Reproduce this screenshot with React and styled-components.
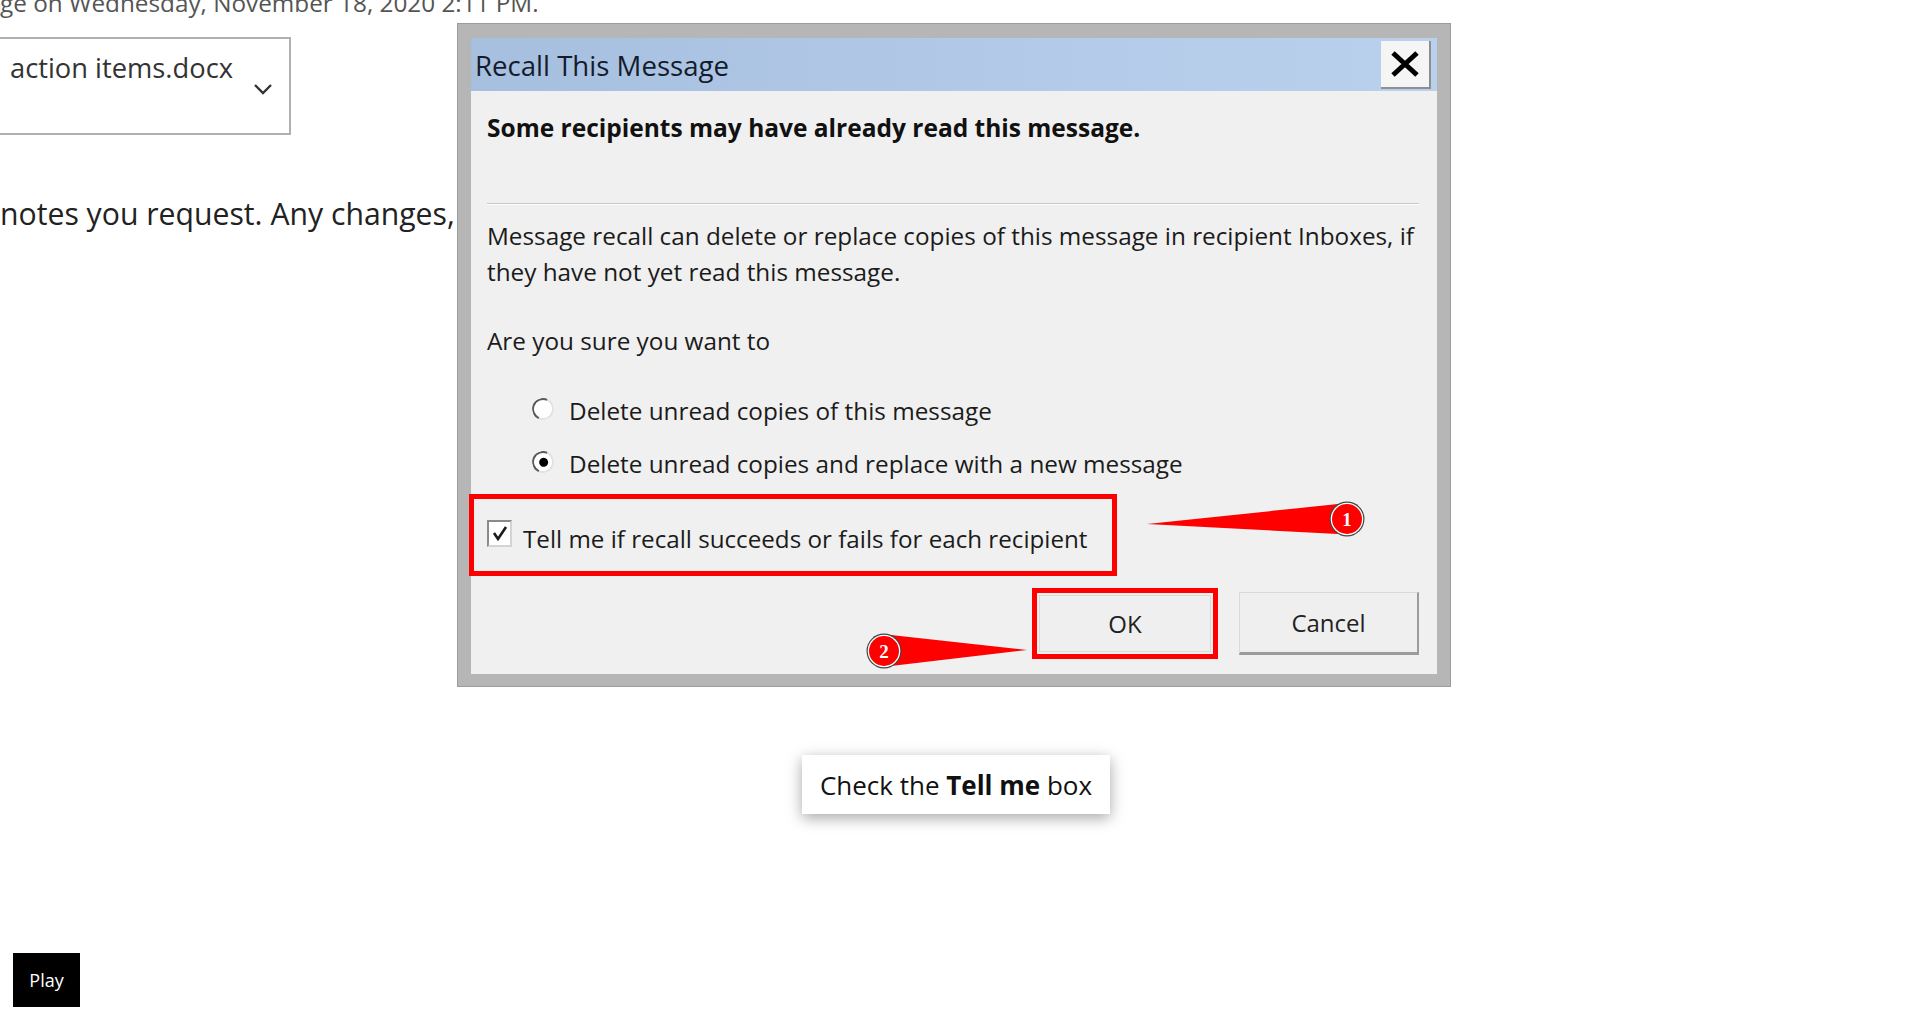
import React from "react";
import styled, { createGlobalStyle } from "styled-components";

const GlobalStyle = createGlobalStyle`
  html, body {
    margin: 0;
    padding: 0;
    background: #fff;
  }
  body {
    font-family: "Open Sans", "Noto Sans", sans-serif;
    color: #1b1b1b;
  }
`;

const SPage = styled.div`
  position: relative;
  width: 1918px;
  height: 1014px;
  overflow: hidden;
  background: #fff;
`;

const SMail = styled.div`
  display: flex;
  flex-direction: column;
  align-items: flex-start;
`;

const SHeaderLine = styled.div`
  margin-top: -12px;
  font-size: 24.3px;
  line-height: 30px;
  color: #555;
  white-space: nowrap;
`;

const SAttachment = styled.div`
  margin-top: 19px;
  margin-left: -20px;
  width: 311px;
  height: 98px;
  border: 2px solid #b0b0b0;
  background: #fff;
  display: flex;
  align-items: flex-start;
  justify-content: space-between;
  padding: 10px 16px 0 28px;
  box-sizing: border-box;
  font-size: 27.3px;
  color: #333;
  white-space: nowrap;
`;

const SChevron = styled.svg`
  margin-top: 34px;
`;

const SBodyLine = styled.div`
  margin-top: 61px;
  font-size: 30.2px;
  line-height: 36px;
  color: #222;
  white-space: nowrap;
`;

const SDialog = styled.div`
  position: absolute;
  left: 457px;
  top: 23px;
  width: 994px;
  height: 664px;
  box-sizing: border-box;
  padding: 14px 13px 12px 13px;
  background: #b6b6b6;
  border: 1px solid #9c9c9c;
  display: flex;
`;

const SWindow = styled.div`
  flex: 1;
  background: #f0f0f0;
  display: flex;
  flex-direction: column;
  position: relative;
`;

const STitleBar = styled.div`
  height: 53px;
  display: flex;
  align-items: center;
  justify-content: space-between;
  padding: 0 6px 0 4px;
  background: linear-gradient(90deg, #a7bfdf 0%, #b3cae8 60%, #bad1ee 100%);
`;

const STitle = styled.div`
  font-size: 27.6px;
  color: #141c2c;
`;

const SClose = styled.button`
  width: 50px;
  height: 48px;
  padding: 0;
  display: flex;
  align-items: center;
  justify-content: center;
  background: #f5f5f5;
  border: 0;
  border-right: 2px solid #8e8e8e;
  border-bottom: 2px solid #8e8e8e;
`;

const SContent = styled.div`
  display: flex;
  flex-direction: column;
  align-items: flex-start;
  padding: 0 18px 0 16px;
`;

const SLead = styled.div`
  margin-top: 22px;
  font-size: 24.5px;
  line-height: 30px;
  font-weight: 700;
  color: #111;
`;

const SRule = styled.div`
  align-self: stretch;
  margin-top: 60px;
  height: 1px;
  background: #c6c6c6;
  border-bottom: 1px solid #fff;
`;

const SText = styled.div`
  margin-top: ${(p) => p.$top}px;
  font-size: 24.3px;
  line-height: 35.5px;
  color: #1b1b1b;
  white-space: nowrap;
`;

const SOptions = styled.div`
  margin-top: 34px;
  padding-left: 45px;
  display: flex;
  flex-direction: column;
  gap: 17px;
`;

const SOption = styled.div`
  display: flex;
  align-items: center;
  gap: 15px;
  height: 36px;
  font-size: 24.3px;
  color: #1b1b1b;
`;

const SRadio = styled.span`
  width: 18px;
  height: 18px;
  margin-top: -4px;
  border-radius: 50%;
  border: 2px solid;
  border-color: #5a5a5a #e2e2e2 #e2e2e2 #5a5a5a;
  transform: rotate(-20deg);
  background: #fff;
  display: flex;
  align-items: center;
  justify-content: center;
  &::after {
    content: "";
    display: ${(p) => (p.$checked ? "block" : "none")};
    width: 9px;
    height: 9px;
    border-radius: 50%;
    background: #000;
  }
`;

const SHighlight = styled.div`
  margin-top: 12px;
  margin-left: -18px;
  width: 648px;
  height: 82px;
  box-sizing: border-box;
  border: 5px solid #ff0000;
  display: flex;
  align-items: center;
  padding: 7px 0 0 13px;
  gap: 11px;
  font-size: 24.2px;
  color: #1b1b1b;
  white-space: nowrap;
`;

const SCheckbox = styled.span`
  width: 25px;
  height: 27px;
  box-sizing: border-box;
  border: 2px solid #8a8a8a;
  border-right-color: #d4d4d4;
  border-bottom-color: #d4d4d4;
  background: #fff;
  display: flex;
  align-items: center;
  justify-content: center;
  margin-top: -9px;
`;

const SButtons = styled.div`
  align-self: stretch;
  margin-top: 12px;
  display: flex;
  justify-content: flex-end;
  align-items: center;
  gap: 21px;
`;

const SOkFrame = styled.div`
  border: 5px solid #ff0000;
  padding: 2px;
  display: flex;
`;

const SButton = styled.button`
  width: ${(p) => p.$w}px;
  height: ${(p) => p.$h}px;
  font-family: "Open Sans", "Noto Sans", sans-serif;
  font-size: 24px;
  color: #222;
  background: #efefef;
  border: 1px solid #dadada;
  border-right: ${(p) => (p.$raised ? "2px solid #9b9b9b" : "1px solid #dadada")};
  border-bottom: ${(p) => (p.$raised ? "3px solid #9b9b9b" : "1px solid #dadada")};
  padding: 0;
`;

const SPointer = styled.svg`
  position: absolute;
  left: ${(p) => p.$x}px;
  top: ${(p) => p.$y}px;
  overflow: visible;
`;

const SCaption = styled.div`
  position: absolute;
  left: 802px;
  top: 755px;
  width: 308px;
  height: 59px;
  background: #fff;
  box-shadow: 0 4px 14px rgba(0, 0, 0, 0.35);
  display: flex;
  align-items: center;
  justify-content: center;
  font-size: 26px;
  color: #111;
  white-space: pre;
  b {
    font-weight: 700;
  }
`;

const SPlay = styled.button`
  position: absolute;
  left: 13px;
  top: 953px;
  width: 67px;
  height: 54px;
  background: #000;
  color: #fff;
  border: 0;
  font-family: "Open Sans", "Noto Sans", sans-serif;
  font-size: 18px;
  padding: 0;
`;

const Badge = ({ cx, cy, label }) => (
  <g>
    <circle cx={cx} cy={cy} r="17.5" fill="#444" />
    <circle cx={cx} cy={cy} r="16.3" fill="#fff" />
    <circle cx={cx} cy={cy} r="15" fill="#ff0000" />
    <text
      x={cx}
      y={cy + 6.5}
      textAnchor="middle"
      fill="#fff"
      fontFamily="Liberation Serif, serif"
      fontWeight="700"
      fontSize="19"
    >
      {label}
    </text>
  </g>
);

const Radio = ({ checked, children }) => (
  <SOption>
    <SRadio $checked={checked} />
    <span>{children}</span>
  </SOption>
);

export default function App() {
  return (
    <SPage>
      <GlobalStyle />
      <SMail>
        <SHeaderLine>ge on Wednesday, November 18, 2020 2:11 PM.</SHeaderLine>
        <SAttachment>
          <span>action items.docx</span>
          <SChevron width="20" height="12" viewBox="0 0 20 12">
            <path d="M2 2 L10 10 L18 2" fill="none" stroke="#333" strokeWidth="2.4" />
          </SChevron>
        </SAttachment>
        <SBodyLine>notes you request. Any changes,</SBodyLine>
      </SMail>

      <SDialog>
        <SWindow>
          <STitleBar>
            <STitle>Recall This Message</STitle>
            <SClose aria-label="Close">
              <svg width="32" height="26" viewBox="0 0 32 26">
                <path d="M4 2 L28 24 M28 2 L4 24" stroke="#000" strokeWidth="5" strokeLinecap="butt" />
              </svg>
            </SClose>
          </STitleBar>
          <SContent>
            <SLead>Some recipients may have already read this message.</SLead>
            <SRule />
            <SText $top={13}>
              Message recall can delete or replace copies of this message in recipient Inboxes, if
              <br />
              they have not yet read this message.
            </SText>
            <SText $top={34}>Are you sure you want to</SText>
            <SOptions>
              <Radio>Delete unread copies of this message</Radio>
              <Radio checked>Delete unread copies and replace with a new message</Radio>
            </SOptions>
            <SHighlight>
              <SCheckbox>
                <svg width="16" height="17" viewBox="0 0 16 17">
                  <path d="M2 8 L6 14 L14 2" fill="none" stroke="#1a1a1a" strokeWidth="2.6" />
                </svg>
              </SCheckbox>
              <span>Tell me if recall succeeds or fails for each recipient</span>
            </SHighlight>
            <SButtons>
              <SOkFrame>
                <SButton $w={172} $h={57}>OK</SButton>
              </SOkFrame>
              <SButton $w={180} $h={63} $raised>Cancel</SButton>
            </SButtons>
          </SContent>

          <SPointer $x={670} $y={461} width="230" height="45" viewBox="0 0 230 45">
            <polygon points="6,25 197,5 197,35" fill="#ff0000" />
            <Badge cx={206} cy={20} label="1" />
          </SPointer>
          <SPointer $x={390} $y={591} width="175" height="45" viewBox="0 0 175 45">
            <polygon points="30,6 166,21 30,37" fill="#ff0000" />
            <Badge cx={23} cy={22} label="2" />
          </SPointer>
        </SWindow>
      </SDialog>

      <SCaption>
        Check the <b>Tell me</b> box
      </SCaption>
      <SPlay>Play</SPlay>
    </SPage>
  );
}
